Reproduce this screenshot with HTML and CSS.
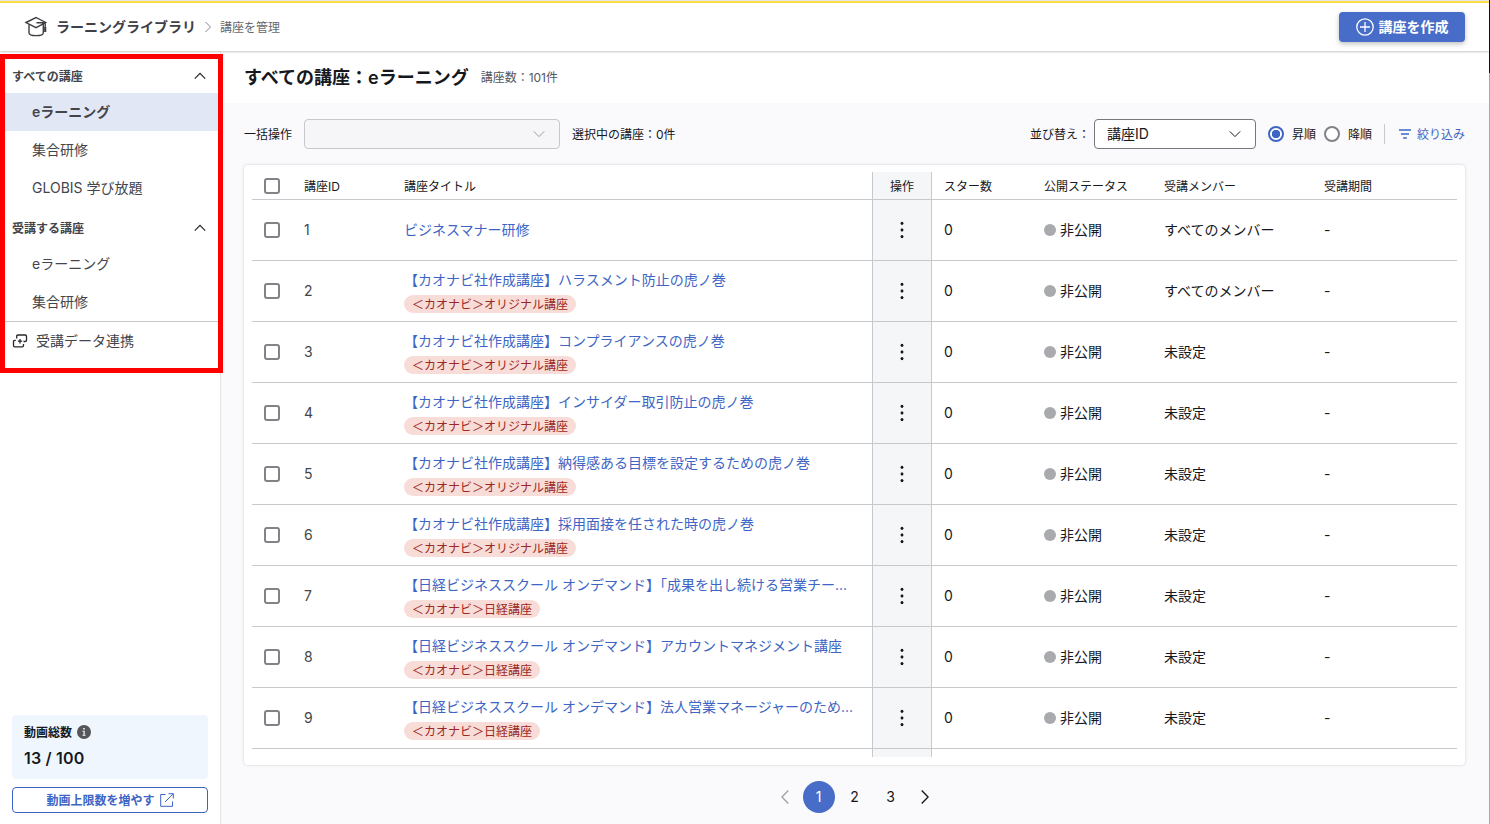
FILE: index.html
```html
<!DOCTYPE html>
<html lang="ja">

<head>
  <meta charset="UTF-8" />
  <meta name="viewport" content="width=device-width, initial-scale=1.0" />
  <title>講座を管理</title>
  <link rel="stylesheet" href="styles.css">
</head>

<body>
  <div class="app">
    <header class="topbar">
      <svg class="logo" width="24" height="24" viewBox="0 0 24 24">
        <path d="M2 7.500 12 2.500l9.700 5-9.700 5.100zM5 9.300v8.400c0 3.900 14.300 3.900 14.300 0V9.300M12.500 7.700h8.700v5" />
        <path class="tassel" d="M21.200 12v5" />
      </svg>
      <span class="app-name">ラーニングライブラリ</span>
      <svg class="crumb-arrow" width="8" height="12" viewBox="0 0 8 12"><path d="M1.500 1 6.500 6l-5 5" /></svg>
      <span class="crumb">講座を管理</span>
      <button class="create-button">
        <svg width="18" height="18" viewBox="0 0 18 18"><circle cx="9" cy="9" r="8.200" /><path d="M9 4v10M4 9h10" /></svg>
        講座を作成
      </button>
    </header>

    <div class="body">
      <aside class="sidebar">
        <nav>
          <h2 class="nav-heading">すべての講座
            <svg width="12" height="8" viewBox="0 0 12 8"><path d="M.8 6.600 6 1.400l5.200 5.200" /></svg>
          </h2>
          <a class="nav-item active">eラーニング</a>
          <a class="nav-item">集合研修</a>
          <a class="nav-item">GLOBIS 学び放題</a>
          <h2 class="nav-heading">受講する講座
            <svg width="12" height="8" viewBox="0 0 12 8"><path d="M.8 6.600 6 1.400l5.200 5.200" /></svg>
          </h2>
          <a class="nav-item">eラーニング</a>
          <a class="nav-item">集合研修</a>
          <a class="nav-link">
            <svg width="16" height="16" viewBox="0 0 16 16">
              <path d="M4.700 5.500V3.300q0-1.300 1.300-1.300h7.200q1.300 0 1.300 1.300v3.900q0 1.300-1.300 1.300H11.500M3.800 7.300H2.800q-1.300 0-1.300 1.300v4q0 1.300 1.300 1.300h7.400q1.300 0 1.300-1.300V11M5.800 8.200h4.400M8 6v4.400" />
            </svg>
            受講データ連携
          </a>
        </nav>
        <div class="quota">
          <div class="quota-label">動画総数
            <svg width="14" height="14" viewBox="0 0 14 14"><circle cx="7" cy="7" r="7" /><path d="M6.200 3h1.600v1.500H6.200zM5.500 5.800h2.200v4h.8v.9h-3v-.9h1V6.700h-1z" /></svg>
          </div>
          <div class="quota-value">13 / 100</div>
        </div>
        <button class="quota-button">動画上限数を増やす
          <svg width="14" height="14" viewBox="0 0 14 14"><path d="M5.500 1.500H.7v11.800h11.800V8.500M5 9l8.200-8.200M8.500.7h4.800v4.800" /></svg>
        </button>
      </aside>

      <main class="content">
        <div class="page-title">
          <h1>すべての講座：eラーニング</h1>
          <span>講座数：101件</span>
        </div>

        <div class="toolbar">
          <span class="label">一括操作</span>
          <div class="select bulk disabled">
            <svg width="12" height="8" viewBox="0 0 12 8"><path d="M.8 1.400 6 6.600l5.200-5.200" /></svg>
          </div>
          <span class="label">選択中の講座：0件</span>
          <span class="label sort-label">並び替え：</span>
          <div class="select sort">講座ID
            <svg width="12" height="8" viewBox="0 0 12 8"><path d="M.8 1.400 6 6.600l5.200-5.200" /></svg>
          </div>
          <label class="radio"><i class="dot on"></i><span class="label">昇順</span></label>
          <label class="radio"><i class="dot"></i><span class="label">降順</span></label>
          <a class="filter">
            <svg width="12" height="10" viewBox="0 0 12 10"><path d="M0 1h12M2 5h8M4.200 9h3.600" /></svg>
            <span class="label">絞り込み</span>
          </a>
        </div>

        <section class="card">
          <table class="courses">
            <colgroup>
              <col class="w-check"><col class="w-id"><col class="w-title"><col class="w-menu">
              <col class="w-star"><col class="w-status"><col class="w-member"><col>
            </colgroup>
            <thead>
              <tr>
                <th><i class="check"></i></th>
                <th>講座ID</th>
                <th>講座タイトル</th>
                <th class="menu">操作</th>
                <th>スター数</th>
                <th>公開ステータス</th>
                <th>受講メンバー</th>
                <th>受講期間</th>
              </tr>
            </thead>
            <tbody>
              <tr>
                <td><i class="check"></i></td>
                <td class="id">1</td>
                <td><a class="title">ビジネスマナー研修</a></td>
                <td class="menu"><i class="kebab"></i></td>
                <td>0</td>
                <td><span class="status">非公開</span></td>
                <td>すべてのメンバー</td>
                <td>-</td>
              </tr>
              <tr>
                <td><i class="check"></i></td>
                <td class="id">2</td>
                <td><a class="title">【カオナビ社作成講座】ハラスメント防止の虎ノ巻</a><span class="tag">＜カオナビ＞オリジナル講座</span></td>
                <td class="menu"><i class="kebab"></i></td>
                <td>0</td>
                <td><span class="status">非公開</span></td>
                <td>すべてのメンバー</td>
                <td>-</td>
              </tr>
              <tr>
                <td><i class="check"></i></td>
                <td class="id">3</td>
                <td><a class="title">【カオナビ社作成講座】コンプライアンスの虎ノ巻</a><span class="tag">＜カオナビ＞オリジナル講座</span></td>
                <td class="menu"><i class="kebab"></i></td>
                <td>0</td>
                <td><span class="status">非公開</span></td>
                <td>未設定</td>
                <td>-</td>
              </tr>
              <tr>
                <td><i class="check"></i></td>
                <td class="id">4</td>
                <td><a class="title">【カオナビ社作成講座】インサイダー取引防止の虎ノ巻</a><span class="tag">＜カオナビ＞オリジナル講座</span></td>
                <td class="menu"><i class="kebab"></i></td>
                <td>0</td>
                <td><span class="status">非公開</span></td>
                <td>未設定</td>
                <td>-</td>
              </tr>
              <tr>
                <td><i class="check"></i></td>
                <td class="id">5</td>
                <td><a class="title">【カオナビ社作成講座】納得感ある目標を設定するための虎ノ巻</a><span class="tag">＜カオナビ＞オリジナル講座</span></td>
                <td class="menu"><i class="kebab"></i></td>
                <td>0</td>
                <td><span class="status">非公開</span></td>
                <td>未設定</td>
                <td>-</td>
              </tr>
              <tr>
                <td><i class="check"></i></td>
                <td class="id">6</td>
                <td><a class="title">【カオナビ社作成講座】採用面接を任された時の虎ノ巻</a><span class="tag">＜カオナビ＞オリジナル講座</span></td>
                <td class="menu"><i class="kebab"></i></td>
                <td>0</td>
                <td><span class="status">非公開</span></td>
                <td>未設定</td>
                <td>-</td>
              </tr>
              <tr>
                <td><i class="check"></i></td>
                <td class="id">7</td>
                <td><a class="title">【日経ビジネススクール オンデマンド】「成果を出し続ける営業チー...</a><span class="tag">＜カオナビ＞日経講座</span></td>
                <td class="menu"><i class="kebab"></i></td>
                <td>0</td>
                <td><span class="status">非公開</span></td>
                <td>未設定</td>
                <td>-</td>
              </tr>
              <tr>
                <td><i class="check"></i></td>
                <td class="id">8</td>
                <td><a class="title">【日経ビジネススクール オンデマンド】アカウントマネジメント講座</a><span class="tag">＜カオナビ＞日経講座</span></td>
                <td class="menu"><i class="kebab"></i></td>
                <td>0</td>
                <td><span class="status">非公開</span></td>
                <td>未設定</td>
                <td>-</td>
              </tr>
              <tr>
                <td><i class="check"></i></td>
                <td class="id">9</td>
                <td><a class="title">【日経ビジネススクール オンデマンド】法人営業マネージャーのため...</a><span class="tag">＜カオナビ＞日経講座</span></td>
                <td class="menu"><i class="kebab"></i></td>
                <td>0</td>
                <td><span class="status">非公開</span></td>
                <td>未設定</td>
                <td>-</td>
              </tr>
              <tr class="rest">
                <td></td><td></td><td></td><td class="menu"></td><td></td><td></td><td></td><td></td>
              </tr>
            </tbody>
          </table>
        </section>

        <div class="pager">
          <a class="arrow prev"><svg width="8" height="14" viewBox="0 0 8 14"><path d="M7.300.6.900 7l6.400 6.400" /></svg></a>
          <a class="current">1</a>
          <a>2</a>
          <a>3</a>
          <a class="arrow"><svg width="8" height="14" viewBox="0 0 8 14"><path d="M.7.6 7.100 7 .7 13.400" /></svg></a>
        </div>
      </main>
    </div>
    <div class="highlight"></div>
  </div>
</body>

</html>
```

FILE: styles.css
```css
* {
  margin: 0;
  padding: 0;
  box-sizing: border-box;
}

body {
  font-family: Inter, "Noto Sans CJK JP", sans-serif;
  font-size: 14px;
  line-height: 20px;
  color: #16181d;
  overflow: hidden;
}

svg {
  fill: none;
  stroke: currentColor;
  flex-shrink: 0;
}

button {
  font: inherit;
}

.app {
  position: relative;
  height: 824px;
  padding-right: 1px;
  display: flex;
  flex-direction: column;
  background: linear-gradient(#111 73px, #a8a9ad 73px);
}

/* header */
.topbar {
  height: 51px;
  display: flex;
  align-items: center;
  padding: 3px 24px 0;
  background: linear-gradient(#e4e6ee 1px, #fddc45 1px, #fddc45 3px, #fff 3px);
  box-shadow: 0 1px 2px rgba(0, 0, 0, 0.22);
  z-index: 2;
}

.logo {
  color: #3e4046;
  stroke-width: 1.4;
}

.logo .tassel {
  stroke-width: 2.2;
}

.app-name {
  margin-left: 8px;
  font-weight: 600;
  color: #3e4046;
}

.crumb-arrow {
  margin: 0 8px;
  color: #85868b;
}

.crumb {
  padding-top: 1px;
  font-size: 12px;
  color: #66686e;
}

.create-button {
  width: 126px;
  height: 30px;
  margin-left: auto;
  display: flex;
  align-items: center;
  justify-content: center;
  gap: 5px;
  border: 0;
  border-radius: 4px;
  background: #486dc8;
  box-shadow: 0 2px 5px rgba(0, 0, 0, 0.25);
  color: #fff;
  font-weight: 600;
}

.create-button svg {
  stroke-width: 1.3;
}

.body {
  flex: 1;
  display: flex;
  min-height: 0;
}

/* sidebar */
.sidebar {
  width: 220px;
  padding: 4px 0 11px;
  display: flex;
  flex-direction: column;
  background: #fff;
  box-shadow: 0 0 2px rgba(0, 0, 0, 0.25);
  color: #43454b;
  z-index: 1;
}

.nav-heading {
  height: 38px;
  padding: 6px 14px 0 12px;
  display: flex;
  align-items: center;
  justify-content: space-between;
  font-size: 12px;
  font-weight: 600;
}

.nav-heading svg {
  margin-bottom: 2px;
  stroke-width: 1.2;
  color: #25272c;
}

.nav-item {
  height: 38px;
  padding-left: 32px;
  display: flex;
  align-items: center;
}

.nav-item.active {
  background: #e1e7f5;
  font-weight: 600;
}

.nav-link {
  height: 39px;
  padding-left: 12px;
  display: flex;
  align-items: center;
  gap: 8px;
  border-top: 1px solid #c8c9cc;
}

.nav-link svg {
  color: #25272c;
  stroke-width: 1.3;
}

.quota {
  height: 64px;
  margin: auto 12px 8px;
  padding: 7px 12px;
  border-radius: 4px;
  background: #eff6fe;
  color: #16181d;
}

.quota-label {
  padding-top: 1px;
  display: flex;
  align-items: center;
  gap: 5px;
  font-size: 12px;
  font-weight: 600;
}

.quota-label svg {
  margin-bottom: 2px;
  fill: #55565a;
  stroke: none;
}

.quota-label path {
  fill: #eff6fe;
}

.quota-value {
  margin-top: 5px;
  font-size: 16px;
  font-weight: 600;
  letter-spacing: 0.2px;
}

.quota-button {
  height: 26px;
  margin: 0 12px;
  padding-top: 1px;
  display: flex;
  align-items: center;
  justify-content: center;
  gap: 5px;
  border: 1px solid #3e65c4;
  border-radius: 4px;
  background: #fff;
  color: #3e65c4;
  font-size: 12px;
  font-weight: 600;
}

.quota-button svg {
  margin-bottom: 2px;
}

/* main column */
.content {
  flex: 1;
  min-width: 0;
  background: #fafafc;
}

.page-title {
  height: 52px;
  padding: 2px 0 0 24px;
  display: flex;
  align-items: center;
  gap: 12px;
  background: #fff;
}

.page-title h1 {
  font-size: 18px;
  font-weight: 600;
}

.page-title span {
  font-size: 12px;
  color: #55575d;
}

.toolbar {
  height: 62px;
  padding: 0 24px;
  display: flex;
  align-items: center;
  font-size: 12px;
}

.label {
  padding-top: 2px;
}

.select {
  height: 30px;
  padding: 0 14px 0 12px;
  display: flex;
  align-items: center;
  justify-content: space-between;
  border: 1px solid #76777c;
  border-radius: 4px;
  background: #fff;
  font-size: 14px;
}

.bulk {
  width: 256px;
  margin: 0 12px;
}

.sort {
  width: 162px;
  margin: 0 12px 0 4px;
}

.disabled {
  justify-content: flex-end;
  border-color: #c8c9cc;
  background: #f6f6f9;
  color: #98999e;
}

.sort-label {
  margin-left: auto;
}

.radio {
  display: flex;
  align-items: center;
  gap: 8px;
  margin-right: 8px;
}

.dot {
  width: 16px;
  height: 16px;
  border: 2px solid #828389;
  border-radius: 50%;
  background: #fff;
}

.dot.on {
  border-color: #3e65c4;
  background: radial-gradient(#3e65c4 4px, #fff 4.5px);
}

.filter {
  height: 20px;
  margin-left: 4px;
  padding-left: 14px;
  display: flex;
  align-items: center;
  gap: 6px;
  border-left: 1px solid #c8c9cc;
  color: #3e65c4;
}

.filter svg {
  stroke-width: 1.4;
}

/* course table */
.card {
  height: 600px;
  margin: 0 24px;
  padding: 7px 8px 8px;
  border-radius: 4px;
  background: #fff;
  box-shadow: 0 0 3px rgba(0, 0, 0, 0.18);
}

.courses {
  width: 100%;
  table-layout: fixed;
  border-collapse: separate;
  border-spacing: 0;
}

.w-check { width: 40px; }
.w-id { width: 100px; }
.w-title { width: 480px; }
.w-menu { width: 60px; }
.w-star { width: 100px; }
.w-status { width: 120px; }
.w-member { width: 160px; }

.courses th,
.courses td {
  padding: 0 12px;
  border-bottom: 1px solid #c8c9cc;
  text-align: left;
  vertical-align: middle;
  white-space: nowrap;
}

.courses th {
  height: 28px;
  padding-top: 2px;
  font-size: 12px;
  font-weight: 400;
}

.courses th:first-child {
  padding-top: 0;
}

.courses td {
  height: 61px;
}

.courses .id {
  color: #43454b;
}

.courses .menu {
  padding: 0;
  border-left: 1px solid #c8c9cc;
  border-right: 1px solid #c8c9cc;
  background: #f5f6f8;
  text-align: center;
}

.courses th.menu {
  padding-top: 2px;
}

.courses .rest td {
  height: 8px;
  border-bottom: 0;
}

.check {
  display: block;
  width: 16px;
  height: 16px;
  border: 2px solid #828389;
  border-radius: 3px;
  background: #fff;
}

.kebab {
  display: block;
  width: 4px;
  height: 20px;
  margin: 0 auto;
  background: radial-gradient(circle, #16181d 1.3px, transparent 1.8px) 0 0 / 4px 6.66px;
}

.title {
  display: block;
  color: #3e65c4;
}

.tag {
  display: block;
  width: fit-content;
  height: 18px;
  margin: 5px 0 -1px;
  padding: 1px 8px 0;
  border-radius: 9px;
  background: #f8dcd8;
  color: #9c2824;
  font-size: 12px;
  line-height: 18px;
}

.status {
  display: flex;
  align-items: center;
  gap: 4px;
}

.status::before {
  content: "";
  width: 12px;
  height: 12px;
  border-radius: 50%;
  background: #a9aaae;
}

.pager {
  margin-top: 16px;
  display: flex;
  justify-content: center;
  gap: 4px;
}

.pager a {
  width: 32px;
  height: 32px;
  display: flex;
  align-items: center;
  justify-content: center;
  border-radius: 50%;
}

.pager .arrow {
  width: 28px;
}

.pager svg {
  stroke-width: 1.4;
}

.pager .prev {
  color: #a0a1a5;
}

.pager .current {
  background: #486dc8;
  color: #fff;
}

/* red frame over the navigation */
.highlight {
  position: absolute;
  left: 0;
  top: 54px;
  width: 223px;
  height: 319px;
  border: 5px solid #f00;
  z-index: 3;
}
```
